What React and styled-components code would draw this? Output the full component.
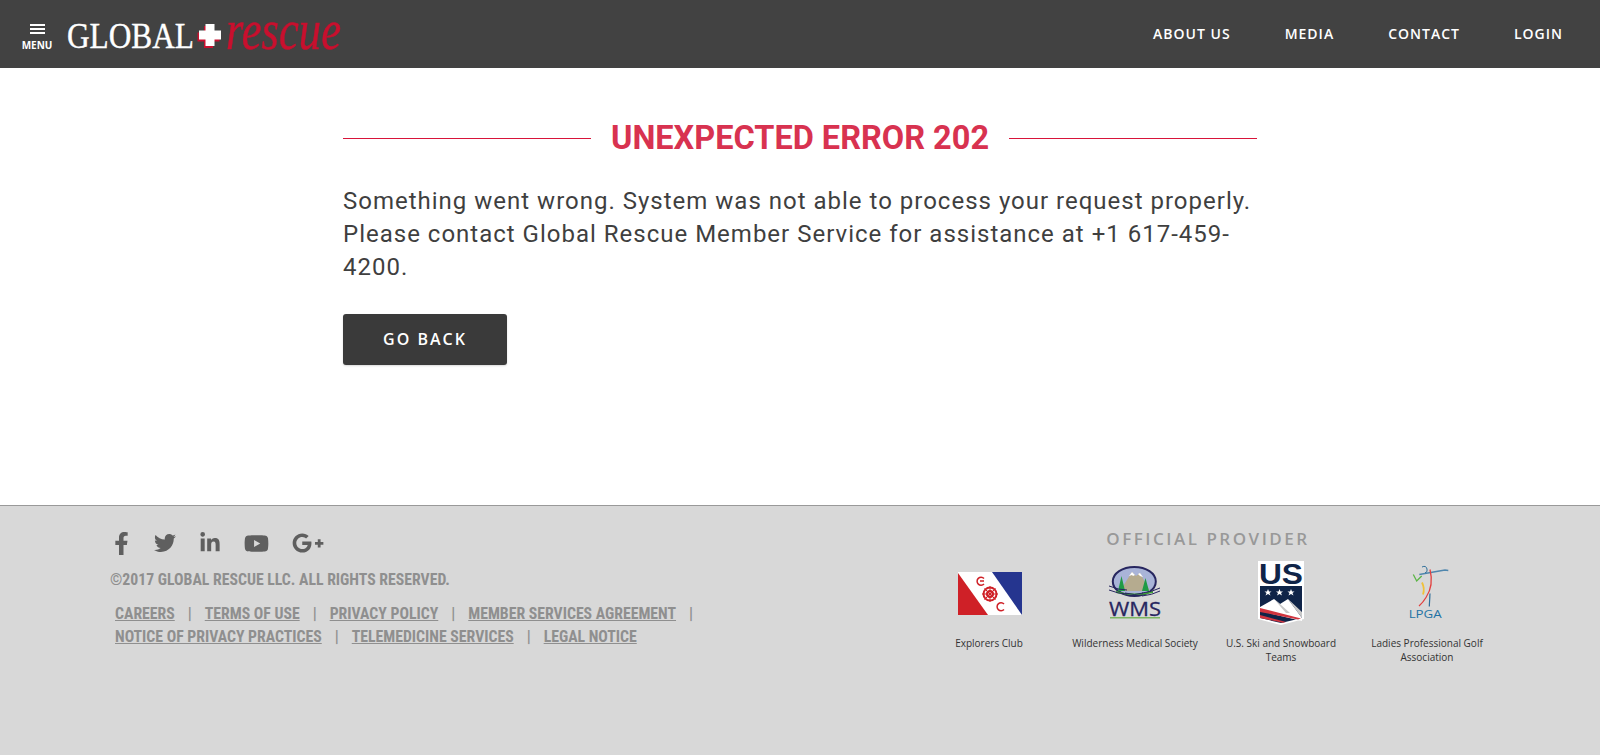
import React from "react";
import styled, { createGlobalStyle } from "styled-components";
import { FaFacebookF, FaTwitter, FaLinkedinIn, FaYoutube, FaGooglePlusG } from "react-icons/fa";

const GlobalStyle = createGlobalStyle`
	html, body {
		margin: 0;
		padding: 0;
		background: #fff;
		font-family: "Roboto", "Liberation Sans", sans-serif;
	}
`;

const Page = styled.div`
	display: flex;
	flex-direction: column;
	min-height: 755px;
`;

const Header = styled.header`
	height: 68px;
	background: #424242;
	display: flex;
	align-items: center;
	justify-content: space-between;
	padding: 0 37px 0 22px;
`;

const Brand = styled.div`
	display: flex;
	align-items: center;
	gap: 15px;
`;

const MenuButton = styled.div`
	display: flex;
	flex-direction: column;
	align-items: center;
	width: 30px;
	padding-top: 7px;
`;

const MenuBar = styled.span`
	display: block;
	width: 15px;
	height: 2px;
	margin-bottom: 2px;
	background: #fff;
`;

const MenuLabel = styled.span`
	margin-top: 3px;
	font-family: "Open Sans", sans-serif;
	font-size: 10px;
	line-height: 12px;
	font-weight: 700;
	color: #fff;
`;

const LogoMark = styled.svg`
	overflow: visible;
`;

const Nav = styled.nav`
	display: flex;
	gap: 54px;
	margin-top: -1px;
`;

const NavLink = styled.a`
	font-family: "Open Sans", sans-serif;
	font-size: 14px;
	font-weight: 600;
	letter-spacing: 1px;
	color: #fff;
`;

const Main = styled.main`
	height: 437px;
	width: 914px;
	margin: 0 auto;
	padding-top: 49px;
	box-sizing: border-box;
`;

const TitleRow = styled.div`
	display: flex;
	align-items: center;
	gap: 20px;
`;

const TitleLine = styled.span`
	flex: 1;
	height: 1px;
	background: #d8143a;
`;

const Title = styled.h1`
	margin: 0;
	font-size: 32.5px;
	line-height: 42px;
	font-weight: 700;
	color: #d83250;
`;

const Message = styled.p`
	margin: 26px 0 0;
	font-size: 24px;
	line-height: 33px;
	letter-spacing: 1px;
	color: #3f3f3f;
`;

const BackButton = styled.button`
	display: block;
	width: 164px;
	height: 51px;
	margin-top: 30px;
	padding: 0 0 2px;
	border: 0;
	border-radius: 3px;
	background: #3a3a3a;
	box-shadow: 0 1px 2px rgba(0, 0, 0, 0.15);
	font-family: "Open Sans", sans-serif;
	font-size: 16px;
	font-weight: 600;
	letter-spacing: 2px;
	color: #fff;
`;

const Footer = styled.footer`
	flex: 1;
	background: #d8d8d8;
	border-top: 1px solid #999;
	display: flex;
	justify-content: space-between;
	padding: 0 100px 0 110px;
`;

const FooterLeft = styled.div`
	padding-top: 23px;
	width: 680px;
`;

const SocialRow = styled.div`
	display: flex;
	align-items: center;
	height: 28px;
	color: #5f5f5f;
`;

const SocialIcon = styled.a`
	display: flex;
	margin-left: ${(props) => props.$gap}px;
`;

const Copyright = styled.div`
	margin-top: 13px;
	font-stretch: 75%;
	font-size: 15.75px;
	line-height: 20px;
	font-weight: 700;
	color: #8f8f8f;
`;

const LinkList = styled.div`
	margin-top: 12px;
	padding-left: 5px;
	font-stretch: 75%;
	font-size: 15.75px;
	line-height: 23px;
	font-weight: 700;
	color: #8f8f8f;
`;

const FooterLink = styled.a`
	text-decoration: underline;
`;

const Divider = styled.span`
	display: inline-block;
	margin: 0 13px;
`;

const Providers = styled.div`
	width: 584px;
	padding-top: 21px;
`;

const ProvidersTitle = styled.div`
	font-family: "Open Sans", sans-serif;
	font-size: 17px;
	line-height: 23px;
	font-weight: 600;
	letter-spacing: 2.5px;
	text-align: center;
	color: #999;
`;

const ProviderGrid = styled.div`
	display: grid;
	grid-template-columns: repeat(4, 146px);
	margin-top: 5px;
`;

const Provider = styled.div`
	display: flex;
	flex-direction: column;
	align-items: center;
`;

const ProviderLogo = styled.div`
	height: 76px;
	display: flex;
	align-items: center;
	justify-content: center;
`;

const ProviderName = styled.div`
	margin-top: 5px;
	padding: 0 8px;
	font-family: "Open Sans", sans-serif;
	font-size: 10px;
	line-height: 14px;
	text-align: center;
	color: #333;
`;

const CROSS = "M138.500 20h9v6.500h6.500v9h-6.500V42h-9v-6.500H132v-9h6.500z";

const Logo = () => (
	<LogoMark width="276" height="60" viewBox="0 0 276 60">
		<text x="0" y="44" fontFamily="Liberation Serif" fontSize="36" fill="#fff" stroke="#fff" strokeWidth="0.4" textLength="127" lengthAdjust="spacingAndGlyphs">GLOBAL</text>
		<path d={CROSS} fill="#c8102e" transform="translate(-1.500 2)" />
		<path d={CROSS} fill="#fff" />
		<text x="159" y="45" fontFamily="Liberation Serif" fontStyle="italic" fontSize="58" fill="#c8102e" stroke="#c8102e" strokeWidth="0.5" textLength="115" lengthAdjust="spacingAndGlyphs">rescue</text>
	</LogoMark>
);

const ExplorersFlag = () => (
	<svg width="66" height="43" viewBox="-2 0 66 43">
		<rect width="64" height="43" fill="#fff" />
		<path d="M0 1L30 43H0z" fill="#cf2027" />
		<path d="M34 0H64V43z" fill="#25358f" />
		<circle cx="32" cy="22" r="6.500" fill="none" stroke="#cf2027" strokeWidth="2" />
		<circle cx="32" cy="22" r="3" fill="none" stroke="#cf2027" strokeWidth="2" />
		<path d="M32 14v16M24 22h16M26.500 16.500l11 11M37.500 16.500l-11 11" stroke="#cf2027" strokeWidth="1" />
		<path d="M26 6.500a4 4 0 1 0 0 5.500M22 9h4" fill="none" stroke="#cf2027" strokeWidth="1.500" />
		<path d="M46 32a4 4 0 1 0 0 5.500" fill="none" stroke="#cf2027" strokeWidth="1.500" />
	</svg>
);

const WmsLogo = () => (
	<svg width="56" height="62" viewBox="0 0 56 62">
		<ellipse cx="27.300" cy="19.400" rx="21.500" ry="14.500" fill="#a9b4d8" stroke="#27265f" strokeWidth="2" />
		<path d="M13 29l12-19 4 4 4-3 10 18z" fill="#b5ab8f" />
		<path d="M22 14l3-4 3 3-2 1-1-1zM31 12l2-1 3 4-3-1z" fill="#fff" />
		<path d="M11 29l3.500-15 3.500 15zM35 29l3.500-13 3.500 13z" fill="#1f9b46" />
		<path d="M9 29q18 5 37 0v2q-18 4-37 0z" fill="#3fa535" />
		<path d="M2 24q10 4 18 4M2 28q10 4 18 4M35 31q10-1 18-5M35 34q10-1 18-5M18 31q10 3 18 0" fill="none" stroke="#27265f" strokeWidth="1" />
		<text x="2" y="53.500" fontFamily="Open Sans" fontSize="20" fill="#27265f" stroke="#27265f" strokeWidth="0.3" textLength="52" lengthAdjust="spacingAndGlyphs">WMS</text>
		<rect x="3" y="55" width="50" height="1.500" fill="#7bb661" />
	</svg>
);

const UsSkiLogo = () => (
	<svg width="46" height="76" viewBox="0 -6 46 76">
		<path d="M0 0H46V58L23 64 0 58z" fill="#fff" />
		<text x="23" y="23" fontFamily="Liberation Sans" fontSize="29" fontWeight="700" fill="#0f2448" textAnchor="middle" textLength="44" lengthAdjust="spacingAndGlyphs">US</text>
		<path d="M2 25H44V57L23 62 2 57z" fill="#0f2448" />
		<path d="M10 28l1 2.500h2.500l-2 1.500 1 2.500-2.500-1.500-2.500 1.500 1-2.500-2-1.500H9zM21.500 28l1 2.500H25l-2 1.500 1 2.500-2.500-1.500-2.500 1.500 1-2.500-2-1.500h2.500zM33 28l1 2.500h2.500l-2 1.500 1 2.500-2.500-1.500-2.500 1.500 1-2.500-2-1.500H32z" fill="#fff" />
		<path d="M2 46l14-8 6 5 8-5 14 19v3L2 50z" fill="#fff" />
		<path d="M16 38l12 14h4L22 43zM30 38l14 19v-6z" fill="#c9c9c9" />
		<path d="M2 47l41 10.500-3 1L2 51zM2 54l26 7-3 .7L2 57z" fill="#d0343f" />
	</svg>
);

const LpgaLogo = () => (
	<svg width="44" height="60" viewBox="0 0 44 60">
		<path d="M14.300 11.500L40 7l3.300.5" fill="none" stroke="#4f86ad" strokeWidth="1.300" />
		<path d="M17 4q4-2 5 2 1 3-2 4" fill="none" stroke="#2e6e99" strokeWidth="1" />
		<path d="M8.300 11.500l3.400 6.500 5-5" fill="none" stroke="#5cb547" strokeWidth="1.300" />
		<path d="M25 6.500q4 16-4 28-3 5-7 8.500" fill="none" stroke="#e2403f" strokeWidth="1.300" />
		<path d="M17 19.500q3 6 1 12" fill="none" stroke="#f0c13a" strokeWidth="1.800" />
		<path d="M25 30.500l-.7 13" stroke="#2e6e99" strokeWidth="1.200" />
		<text x="3.700" y="55" fontFamily="Open Sans" fontSize="11" fill="#2272a4" textLength="33" lengthAdjust="spacingAndGlyphs">LPGA</text>
	</svg>
);

const providers = [
	{ name: "Explorers Club", logo: <ExplorersFlag /> },
	{ name: "Wilderness Medical Society", logo: <WmsLogo /> },
	{ name: "U.S. Ski and Snowboard Teams", logo: <UsSkiLogo /> },
	{ name: "Ladies Professional Golf Association", logo: <LpgaLogo /> },
];

function App() {
	return (
		<Page>
			<GlobalStyle />
			<Header>
				<Brand>
					<MenuButton>
						<MenuBar />
						<MenuBar />
						<MenuBar />
						<MenuLabel>MENU</MenuLabel>
					</MenuButton>
					<Logo />
				</Brand>
				<Nav>
					<NavLink>ABOUT US</NavLink>
					<NavLink>MEDIA</NavLink>
					<NavLink>CONTACT</NavLink>
					<NavLink>LOGIN</NavLink>
				</Nav>
			</Header>
			<Main>
				<TitleRow>
					<TitleLine />
					<Title>UNEXPECTED ERROR 202</Title>
					<TitleLine />
				</TitleRow>
				<Message>
					Something went wrong. System was not able to process your request properly. Please contact Global Rescue Member Service for assistance at +1 617-459-4200.
				</Message>
				<BackButton>GO BACK</BackButton>
			</Main>
			<Footer>
				<FooterLeft>
					<SocialRow>
						<SocialIcon $gap={0}><FaFacebookF size={23} /></SocialIcon>
						<SocialIcon $gap={21}><FaTwitter size={22} /></SocialIcon>
						<SocialIcon $gap={23}><FaLinkedinIn size={22} /></SocialIcon>
						<SocialIcon $gap={23}><FaYoutube size={25} /></SocialIcon>
						<SocialIcon $gap={23}><FaGooglePlusG size={32} /></SocialIcon>
					</SocialRow>
					<Copyright>©2017 GLOBAL RESCUE LLC. ALL RIGHTS RESERVED.</Copyright>
					<LinkList>
						<FooterLink>CAREERS</FooterLink><Divider>|</Divider>
						<FooterLink>TERMS OF USE</FooterLink><Divider>|</Divider>
						<FooterLink>PRIVACY POLICY</FooterLink><Divider>|</Divider>
						<FooterLink>MEMBER SERVICES AGREEMENT</FooterLink><Divider>|</Divider>
						<br />
						<FooterLink>NOTICE OF PRIVACY PRACTICES</FooterLink><Divider>|</Divider>
						<FooterLink>TELEMEDICINE SERVICES</FooterLink><Divider>|</Divider>
						<FooterLink>LEGAL NOTICE</FooterLink>
					</LinkList>
				</FooterLeft>
				<Providers>
					<ProvidersTitle>OFFICIAL PROVIDER</ProvidersTitle>
					<ProviderGrid>
						{providers.map((item) => (
							<Provider key={item.name}>
								<ProviderLogo>{item.logo}</ProviderLogo>
								<ProviderName>{item.name}</ProviderName>
							</Provider>
						))}
					</ProviderGrid>
				</Providers>
			</Footer>
		</Page>
	);
}

export default App;
